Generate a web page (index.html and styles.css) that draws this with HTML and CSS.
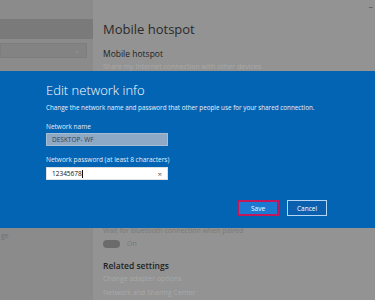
FILE: index.html
```html
<!DOCTYPE html>
<html lang="en">
<head>
    <meta charset="UTF-8">
    <meta name="viewport" content="width=device-width, initial-scale=1.0">
    <title>Mobile hotspot</title>
    <link rel="stylesheet" href="styles.css">
</head>
<body>
    <!-- Janela de configurações (escurecida atrás do diálogo) -->
    <div class="window">
        <div class="top-strip"></div>
        <div class="window-body">
            <aside class="sidebar">
                <div class="side-selected"></div>
                <div class="side-search"><span class="chev">&#8964;</span></div>
                <div class="side-spacer"></div>
                <div class="side-item">ge</div>
            </aside>

            <main class="main">
                <span class="minimize">&#8211;</span>
                <h1 class="page-title">Mobile hotspot</h1>
                <h2 class="section-title">Mobile hotspot</h2>
                <p class="faint">Share my Internet connection with other devices</p>
                <div class="main-spacer"></div>
                <p class="muted">Wait for bluetooth connection when paired</p>
                <div class="toggle-row">
                    <span class="toggle"></span>
                    <span class="toggle-label">On</span>
                </div>
                <h2 class="section-title related">Related settings</h2>
                <p class="faint">Change adapter options</p>
                <p class="faint">Network and Sharing Center</p>
            </main>
        </div>
        <div class="bottom-strip"></div>
    </div>

    <!-- Diálogo -->
    <div class="dialog">
        <h3 class="dialog-title">Edit network info</h3>
        <p class="dialog-desc">Change the network name and password that other people use for your shared connection.</p>

        <label class="field-label">Network name</label>
        <div class="input input-disabled">DESKTOP- WF</div>

        <label class="field-label">Network password (at least 8 characters)</label>
        <div class="input input-active">
            <span>12345678<span class="caret"></span></span>
            <span class="clear">&#215;</span>
        </div>

        <div class="dialog-buttons">
            <button class="btn btn-save">Save</button>
            <button class="btn btn-cancel">Cancel</button>
        </div>
    </div>
</body>
</html>
```

FILE: styles.css
```css
* {
    margin: 0;
    padding: 0;
    box-sizing: border-box;
}

body {
    font-family: 'Open Sans', 'Noto Sans', sans-serif;
    width: 375px;
    height: 300px;
    overflow: hidden;
    position: relative;
    background: #939393;
}

/* Janela de fundo */
.window {
    display: flex;
    flex-direction: column;
    height: 300px;
}

.top-strip {
    height: 2px;
    background: #7e8791;
}

.window-body {
    flex: 1;
    display: grid;
    grid-template-columns: 93px 1fr;
}

.bottom-strip {
    height: 4px;
    background: #8d96a1;
}

.sidebar {
    background: #8b8b8b;
    padding-top: 19px;
    display: flex;
    flex-direction: column;
}

.side-selected {
    height: 20px;
    background: #7a7a7a;
}

.side-search {
    height: 15px;
    width: 87px;
    margin-top: 4px;
    background: #838383;
    border: 1px solid #7d7d7d;
    display: flex;
    justify-content: flex-end;
    align-items: center;
    padding-right: 6px;
}

.chev {
    font-size: 7px;
    color: #9a9a9a;
    line-height: 1;
}

.side-spacer {
    height: 173px;
}

.side-item {
    font-size: 7px;
    color: #707070;
    padding-left: 1px;
}

.main {
    position: relative;
    padding: 20px 0 0 10px;
    color: #252525;
}

.minimize {
    position: absolute;
    top: 0;
    right: 2px;
    font-size: 9px;
    color: #555;
}

.page-title {
    font-size: 13px;
    font-weight: 400;
    line-height: 18px;
    color: #2a2a2a;
}

.section-title {
    font-size: 8.5px;
    font-weight: 400;
    line-height: 12px;
    margin-top: 10px;
    color: #1f1f1f;
}

.faint {
    font-size: 7px;
    line-height: 14px;
    color: #a9a9a9;
}

.main-spacer {
    height: 152px;
}

.muted {
    font-size: 7px;
    line-height: 10px;
    color: #7a7a7a;
}

.toggle-row {
    display: flex;
    align-items: center;
    gap: 7px;
    margin-top: 3px;
}

.toggle {
    width: 17px;
    height: 8px;
    border-radius: 4px;
    background: #6b6b6b;
}

.toggle-label {
    font-size: 7px;
    color: #777;
}

.related {
    margin-top: 12px;
    font-weight: 600;
}

/* Diálogo azul */
.dialog {
    position: absolute;
    top: 71px;
    left: 0;
    right: 0;
    height: 157px;
    background: #0364b4;
    padding: 11px 0 0 46px;
    color: #fff;
}

.dialog-title {
    font-size: 13px;
    font-weight: 300;
    line-height: 16px;
}

.dialog-desc {
    font-size: 6.3px;
    line-height: 10px;
    margin-top: 5px;
    color: #e8f1fa;
}

.field-label {
    display: block;
    font-size: 6.5px;
    line-height: 9px;
    margin-top: 9px;
    color: #e2edf8;
}

.input {
    width: 122px;
    height: 13px;
    margin-top: 2px;
    font-size: 6.5px;
    padding: 0 5px;
    display: flex;
    align-items: center;
    justify-content: space-between;
}

.input-disabled {
    background: #8ea9c6;
    border: 1px solid #a6bcd3;
    color: #34414e;
}

.input-active {
    background: #fff;
    border: 1px solid #e0e0e0;
    color: #111;
    margin-top: 3px;
}

.caret {
    display: inline-block;
    width: 1px;
    height: 8px;
    background: #111;
    vertical-align: middle;
}

.clear {
    font-size: 8px;
    color: #555;
}

.dialog-buttons {
    display: flex;
    justify-content: flex-end;
    gap: 8px;
    margin-top: 20px;
    padding-right: 48px;
}

.btn {
    font-family: 'Open Sans', 'Noto Sans', sans-serif;
    font-size: 6.5px;
    color: #fff;
    height: 16px;
}

.btn-save {
    width: 42px;
    background: #1a7ad2;
    border: 2px solid #c2185b;
}

.btn-cancel {
    width: 40px;
    background: #0a5fae;
    border: 1.5px solid #b5d6f2;
}
```
